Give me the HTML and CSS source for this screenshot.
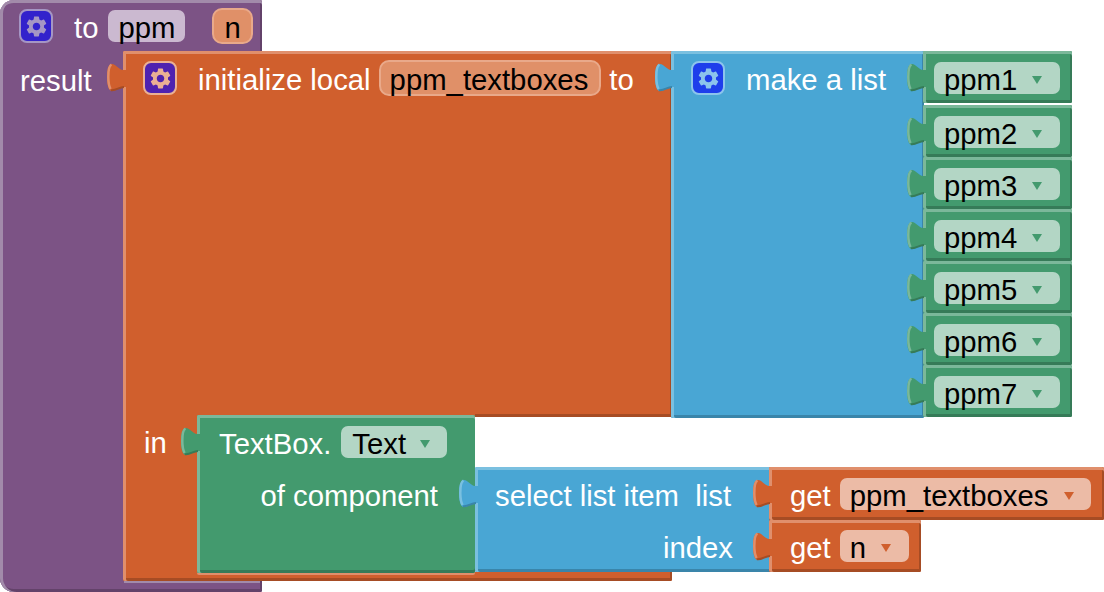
FILE: index.html
```html
<!DOCTYPE html>
<html lang="en">
<head>
<meta charset="utf-8">
<title>ppm procedure blocks</title>
<link rel="stylesheet" href="styles.css">
</head>
<body>
<svg class="defs" width="0" height="0" aria-hidden="true">
  <symbol id="tab" viewBox="0 0 20 30" overflow="visible">
    <path class="tab-fill" d="M20 7H16C12 7 9 1 5 1C1 1 0 8 0 14C0 20 1 28 5 28C9 28 12 24 16 24H20Z"/>
    <path class="tab-hl" d="M4.5 1.6C2.2 2.5 1.3 8 1.3 14C1.3 19 2 23 3.5 26"/>
    <path class="tab-dk" d="M4 27.2C9 28 12 24 17 24"/>
  </symbol>
  <symbol id="gear" viewBox="0 0 24 24">
    <path d="M19.14 12.94c.04-.3.06-.61.06-.94 0-.32-.02-.64-.07-.94l2.03-1.58a.49.49 0 0 0 .12-.61l-1.92-3.32a.488.488 0 0 0-.59-.22l-2.39.96c-.5-.38-1.03-.7-1.62-.94l-.36-2.54a.484.484 0 0 0-.48-.41h-3.84c-.24 0-.43.17-.47.41l-.36 2.54c-.59.24-1.13.57-1.62.94l-2.39-.96c-.22-.08-.47 0-.59.22L2.74 8.87c-.12.21-.08.47.12.61l2.03 1.58c-.05.3-.09.63-.09.94s.02.64.07.94l-2.03 1.58a.49.49 0 0 0-.12.61l1.92 3.32c.12.22.37.29.59.22l2.39-.96c.5.38 1.03.7 1.62.94l.36 2.54c.05.24.24.41.48.41h3.84c.24 0 .44-.17.47-.41l.36-2.54c.59-.24 1.13-.56 1.62-.94l2.39.96c.22.08.47 0 .59-.22l1.92-3.32c.12-.22.07-.47-.12-.61l-2.01-1.58zM12 15.6c-1.98 0-3.6-1.62-3.6-3.6s1.62-3.6 3.6-3.6 3.6 1.62 3.6 3.6-1.62 3.6-3.6 3.6z"/>
  </symbol>
</svg>

<main class="canvas">

  <section class="block purple b-proc">
    <div class="row r-proc-head">
      <span class="mutator m-proc"><svg class="gear"><use href="#gear"/></svg></span>
      <span class="label l-to">to</span>
      <span class="name n-ppm">ppm</span>
      <span class="arg a-n">n</span>
    </div>
    <div class="row r-result"><span class="label">result</span></div>
  </section>

  <section class="block orange b-local">
    <svg class="tab"><use href="#tab"/></svg>
    <div class="row r-local">
      <span class="mutator m-local"><svg class="gear"><use href="#gear"/></svg></span>
      <span class="label l-init">initialize local</span>
      <span class="arg a-local">ppm_textboxes</span>
      <span class="label l-to2">to</span>
    </div>
    <div class="row r-in"><span class="label">in</span></div>
    <i class="notch-edge"></i>
  </section>

  <section class="block green b-textbox">
    <svg class="tab"><use href="#tab"/></svg>
    <div class="row r-tb">
      <span class="label">TextBox.</span>
      <span class="field f-text">Text<i class="tri"></i></span>
    </div>
    <div class="row r-of"><span class="label">of component</span></div>
  </section>

  <section class="block blue b-select">
    <svg class="tab"><use href="#tab"/></svg>
    <div class="row r-sel"><span class="label">select list item&nbsp; list</span></div>
    <div class="row r-idx"><span class="label">index</span></div>
  </section>

  <section class="block orange b-get1">
    <svg class="tab"><use href="#tab"/></svg>
    <div class="row r-get">
      <span class="label">get</span>
      <span class="field">ppm_textboxes<i class="tri"></i></span>
    </div>
  </section>

  <section class="block orange b-get2">
    <svg class="tab"><use href="#tab"/></svg>
    <div class="row r-get">
      <span class="label">get</span>
      <span class="field">n<i class="tri"></i></span>
    </div>
  </section>

  <section class="block blue b-list">
    <svg class="tab"><use href="#tab"/></svg>
    <div class="row r-list">
      <span class="mutator m-list"><svg class="gear"><use href="#gear"/></svg></span>
      <span class="label l-make">make a list</span>
    </div>
  </section>

  <div class="stack">
    <section class="block green item first"><svg class="tab"><use href="#tab"/></svg><span class="field">ppm1<i class="tri"></i></span></section>
    <section class="block green item"><svg class="tab"><use href="#tab"/></svg><span class="field">ppm2<i class="tri"></i></span></section>
    <section class="block green item"><svg class="tab"><use href="#tab"/></svg><span class="field">ppm3<i class="tri"></i></span></section>
    <section class="block green item"><svg class="tab"><use href="#tab"/></svg><span class="field">ppm4<i class="tri"></i></span></section>
    <section class="block green item"><svg class="tab"><use href="#tab"/></svg><span class="field">ppm5<i class="tri"></i></span></section>
    <section class="block green item"><svg class="tab"><use href="#tab"/></svg><span class="field">ppm6<i class="tri"></i></span></section>
    <section class="block green item"><svg class="tab"><use href="#tab"/></svg><span class="field">ppm7<i class="tri"></i></span></section>
  </div>
</main>
</body>
</html>
```

FILE: styles.css
```css
* { box-sizing: border-box; }

html, body {
  margin: 0;
  background: #fff;
}

.defs { position: absolute; }

.canvas {
  position: relative;
  width: 1104px;
  height: 592px;
  overflow: hidden;
  font-family: "Liberation Sans", Arial, sans-serif;
  font-size: 29.3px;
  line-height: 32px;
}

/* palette */
.purple { --fill: #7c5385; --hl: #a28baa; --dk: #63426a; --gear: #a596c4; --mut: #3322cc; }
.orange { --fill: #d05f2d; --hl: #e08f6c; --dk: #a64c24; --gear: #eab094; --mut: #4e22b0; --field: #ecbba6; }
.green  { --fill: #439a6e; --hl: #7bb89a; --dk: #367b58; --field: #b3d6c5; }
.blue   { --fill: #49a6d4; --hl: #7ac0e0; --dk: #3a85aa; --gear: #8cc4ec; --mut: #1e3eeb; }

/* block frame */
.block {
  position: absolute;
  background: var(--fill);
  border-radius: 2px;
  box-shadow:
    inset 3px 0 0 var(--hl),
    inset 0 3px 0 var(--hl),
    inset -2px 0 0 var(--dk),
    inset 0 -3px 0 var(--dk);
}

.row {
  display: flex;
  align-items: center;
}

.label {
  color: #fff;
  white-space: pre;
  padding-top: 4px;
}

/* puzzle tab */
.tab {
  position: absolute;
  left: -16px;
  top: 12px;
  width: 20px;
  height: 30px;
  overflow: visible;
}
.tab-fill { fill: var(--fill); }
.tab-hl { fill: none; stroke: var(--hl); stroke-width: 2.5; }
.tab-dk { fill: none; stroke: var(--dk); stroke-width: 2; }

/* mutator button */
.mutator {
  flex: none;
  display: flex;
  align-items: center;
  justify-content: center;
  width: 34px;
  height: 34px;
  background: var(--mut);
  border: 2px solid var(--gear);
  border-radius: 8px;
}
.gear {
  width: 25px;
  height: 25px;
  fill: var(--gear);
}

/* editable fields */
.name,
.field {
  flex: none;
  display: inline-flex;
  align-items: center;
  height: 32px;
  border-radius: 7px;
  color: #000;
  padding-top: 4px;
}
.name {
  background: #cbb9d0;
  padding-left: 10px;
  padding-right: 10px;
}
.field {
  padding-left: 10px;
  padding-right: 18px;
  background: var(--field);
}
.tri {
  flex: none;
  width: 0;
  height: 0;
  margin-left: 15px;
  border-left: 5px solid transparent;
  border-right: 5px solid transparent;
  border-top: 8px solid var(--fill);
}
.arg {
  flex: none;
  height: 36px;
  padding: 4px 9px 0;
  line-height: 27px;
  color: #000;
  background: #e09068;
  border: 2.5px solid #e9a98a;
  border-radius: 10px;
}

/* procedure block */
.b-proc {
  left: 0;
  top: 0;
  width: 262px;
  height: 592px;
  border-radius: 14px 2px 2px 14px;
}
.b-proc::after {
  content: "";
  position: absolute;
  left: 124px;
  top: 581px;
  width: 136px;
  height: 2px;
  background: var(--hl);
}
.r-proc-head { height: 52px; padding-left: 19px; }
.l-to { margin-left: 21px; }
.n-ppm { margin-left: 10px; }
.a-n { margin-left: 27px; padding-left: 10px; padding-right: 10px; }
.r-result { height: 54px; padding-left: 20px; }

/* local variable block: C-shaped around its "in" socket */
.b-local {
  left: 123px;
  top: 51px;
  width: 549px;
  height: 530px;
  clip-path: polygon(-20px -2px, 551px -2px, 551px 366px, 352px 366px, 352px 521px, 551px 521px, 551px 532px, -20px 532px);
}
.notch-edge {
  position: absolute;
  left: 352px;
  top: 363px;
  width: 197px;
  height: 3px;
  background: var(--dk);
}
.r-local { height: 54px; padding-left: 20px; }
.l-init { margin-left: 21px; }
.a-local { margin-left: 8px; padding-left: 9px; padding-right: 11px; }
.l-to2 { margin-left: 8px; }
.r-in { margin-top: 310px; height: 52px; padding-left: 21px; }

/* component getter */
.b-textbox {
  left: 197px;
  top: 415px;
  width: 278px;
  height: 158px;
  box-shadow:
    inset 3px 0 0 var(--hl),
    inset 0 3px 0 var(--hl),
    inset 0 -3px 0 var(--dk),
    0 2px 0 #e08f6c;
}
.r-tb { height: 54px; padding-left: 22px; gap: 10px; }
.f-text { padding-left: 11px; padding-right: 17px; }
.f-text .tri { margin-left: 14px; }
.r-of { height: 50px; justify-content: flex-end; padding-right: 37px; }

/* select list item */
.b-select {
  left: 475px;
  top: 467px;
  width: 296px;
  height: 105px;
}
.r-sel { height: 54px; padding-left: 20px; }
.r-idx { height: 50px; justify-content: flex-end; padding-right: 38px; }

/* variable getters */
.b-get1 { left: 769px; top: 467px; width: 335px; height: 53px; }
.b-get2 { left: 769px; top: 520px; width: 152px; height: 52px; }
.r-get { height: 54px; padding-left: 21px; gap: 9px; }
.b-get1 .tri { margin-left: 16px; }
.b-get1 .field { padding-right: 17px; }
.b-get2 .r-get { height: 52px; }

/* make a list */
.b-list {
  left: 671px;
  top: 51px;
  width: 253px;
  height: 367px;
}
.r-list { height: 54px; padding-left: 20px; }
.l-make { margin-left: 21px; }

/* list items */
.stack {
  position: absolute;
  left: 923px;
  top: 51px;
  width: 149px;
  height: 367px;
  display: flex;
  flex-direction: column;
}
.item {
  position: relative;
  flex: none;
  height: 52px;
  padding: 11px 0 0 11px;
  display: block;
}
.item.first { margin-bottom: 2px; }
.item .field { vertical-align: top; }
```
